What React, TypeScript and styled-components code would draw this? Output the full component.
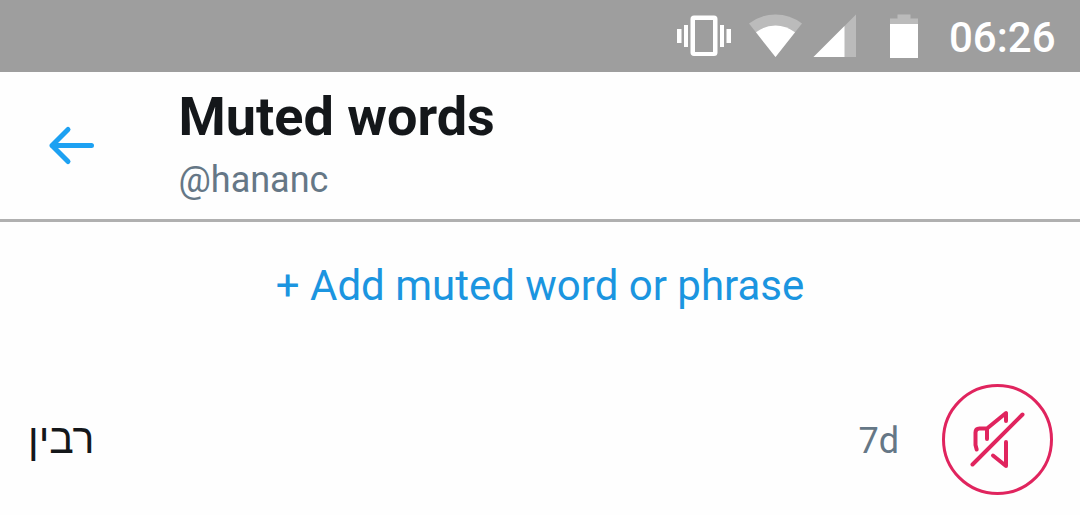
import styled, { createGlobalStyle } from "styled-components";

const GlobalStyle = createGlobalStyle`
  * {
    box-sizing: border-box;
  }
  body {
    margin: 0;
    background: #fefefe;
    font-family: Roboto, "Liberation Sans", sans-serif;
  }
`;
const Screen = styled.div`
  width: 1080px;
  height: 515px;
  overflow: hidden;
`;
const StatusBar = styled.div`
  display: flex;
  justify-content: flex-end;
  height: 72px;
  background: #9e9e9e;
`;
const StatusIcons = styled.svg`
  width: 250px;
  height: 72px;
  margin-right: 29px;
`;
const Clock = styled.div`
  width: 131px;
  padding-top: 13px;
  color: #fff;
  font-size: 42px;
  font-weight: 500;
  line-height: 50px;
`;
const Header = styled.header`
  display: flex;
  height: 150px;
  border-bottom: 3px solid #b0b0b0;
`;
const BackButton = styled.button`
  width: 178.5px;
  padding: 0 0 2px 42px;
  border: 0;
  background: none;
  text-align: left;
  svg {
    display: block;
  }
`;
const Heading = styled.div`
  padding-top: 13px;
`;
const Title = styled.h1`
  margin: 0;
  color: #14171a;
  font-size: 54px;
  font-weight: 700;
  line-height: 64px;
`;
const Handle = styled.div`
  margin-top: 10px;
  color: #657786;
  font-size: 36px;
  line-height: 42px;
`;
const AddButton = styled.button`
  display: block;
  width: 100%;
  height: 128px;
  padding: 0;
  border: 0;
  background: none;
  color: #1b95e0;
  font-family: inherit;
  font-size: 42px;
  line-height: 50px;
`;
const WordRow = styled.div`
  display: flex;
  align-items: center;
  height: 179px;
  padding: 0 27px 0 28px;
`;
const Word = styled.div`
  flex: 1;
  padding-bottom: 2px;
  color: #14171a;
  font-family: "Liberation Sans", sans-serif;
  font-size: 41px;
  line-height: 50px;
`;
const Duration = styled.div`
  margin-right: 43px;
  padding-top: 2px;
  color: #657786;
  font-size: 36px;
  line-height: 42px;
`;
const MuteButton = styled.button`
  display: flex;
  width: 111px;
  height: 111px;
  padding: 0;
  border: 3px solid #e0245e;
  border-radius: 50%;
  background: none;
`;

const App = () => {
  return (
    <Screen>
      <GlobalStyle />
      <StatusBar>
        <StatusIcons viewBox="670 0 250 72" fill="#fff">
          {/* vibrate */}
          <path d="M677 29h4.500v14h-4.500zM684 25h4v22h-4zM720 25h4v22h-4zM726.500 29h4.500v14h-4.500z" />
          <path
            fillRule="evenodd"
            d="M694 15.500h20a3.500 3.500 0 0 1 3.500 3.500v33.500a3.500 3.500 0 0 1-3.500 3.500h-20a3.500 3.500 0 0 1-3.500-3.500v-33.500a3.500 3.500 0 0 1 3.500-3.500zM695 20v32h18v-32z"
          />
          {/* wifi */}
          <path
            fill="#bbb"
            d="M775.500 57L749 23.500Q761 14.500 775.500 14.500T802 23.500z"
          />
          <path d="M775.500 57L756 32.300Q765 25.500 775.500 25.500T795 32.300z" />
          {/* signal */}
          <path fill="#bbb" d="M856 14.500V57H813.500z" />
          <path d="M844.500 26V57H813.500z" />
          {/* battery */}
          <path fill="#bbb" d="M890 24v-5.500h7.500v-4h13v4h7.500v5.500z" />
          <path d="M890 24h28v34h-28z" />
        </StatusIcons>
        <Clock>06:26</Clock>
      </StatusBar>
      <Header>
        <BackButton aria-label="Back">
          <svg
            width="60"
            height="60"
            viewBox="42 115 60 60"
            fill="none"
            stroke="#1da1f2"
            strokeWidth="5"
            strokeLinecap="round"
            strokeLinejoin="round"
          >
            <path d="M91.500 145.500H52M68 129.500L52 145.500L68 161.500" />
          </svg>
        </BackButton>
        <Heading>
          <Title>Muted words</Title>
          <Handle>@hananc</Handle>
        </Heading>
      </Header>
      <AddButton>+ Add muted word or phrase</AddButton>
      <WordRow>
        <Word>רבין</Word>
        <Duration>7d</Duration>
        <MuteButton aria-label="Unmute">
          <svg
            width="105"
            height="105"
            viewBox="945 387 105 105"
            fill="none"
            stroke="#e0245e"
            strokeWidth="4"
            strokeLinecap="round"
            strokeLinejoin="round"
          >
            <path d="M972.500 464.500L1022.500 414.500" />
            <path d="M976.700 449.500L975.500 445V432.500Q975.500 428.500 979.500 428.500H987L1006 413V421M987 428.500V439" />
            <path d="M1006 442V466L993 455.500" />
          </svg>
        </MuteButton>
      </WordRow>
    </Screen>
  );
};

export default App;
